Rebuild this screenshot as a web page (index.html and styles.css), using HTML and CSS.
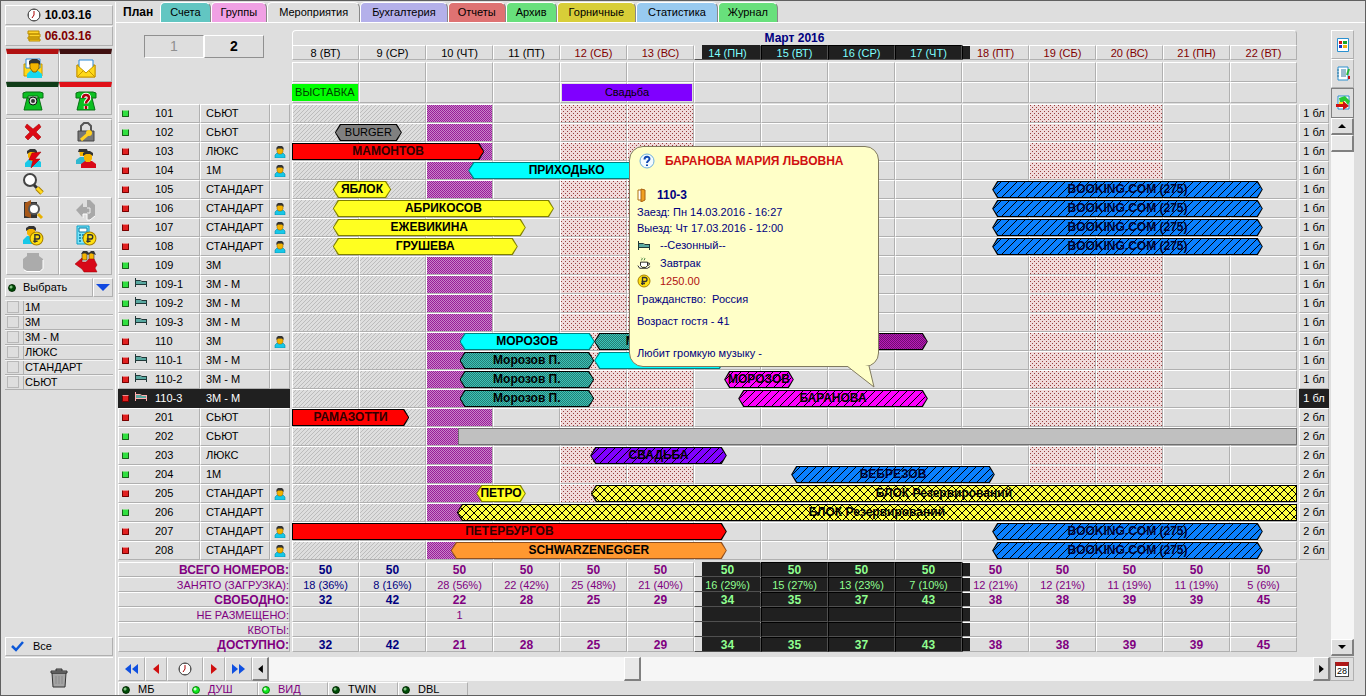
FILE: index.html
```html
<!DOCTYPE html>
<html lang="ru">
<head>
<meta charset="UTF-8">
<meta name="viewport" content="width=device-width, initial-scale=1.0">
<title>План номеров</title>
<link rel="stylesheet" href="styles.css">
</head>
<body>

<!-- набор иконок -->
<svg class="sprite" aria-hidden="true">
    <symbol id="i-clock" viewBox="0 0 14 14"><circle cx="7" cy="7" r="6" fill="#fff" stroke="#333"/><path d="M7 3v4l-2 3" fill="none" stroke="#a00"/><path d="M7 1v1M7 12v1M1 7h1M12 7h1" stroke="#333"/></symbol>
    <symbol id="i-coins" viewBox="0 0 14 12"><path d="M1 1h11v3H1zM2 4h11v3H2zM1 7h11v2H1zM2 9h11v2H2z" fill="#ffd52a" stroke="#b88a00"/></symbol>
    <symbol id="i-man" viewBox="0 0 12 12"><path d="M1 12V9l2-2h6l2 2v3z" fill="#16c8e8" stroke="#0a8aa8" stroke-width=".6"/><path d="M3 2h6v4L7.500 8h-3L3 6z" fill="#f2b200" stroke="#8a6200" stroke-width=".5"/><path d="M2.500 4V1.500L4 0h4l1.500 1.500V4L8 2.500H4z" fill="#333"/></symbol>
    <symbol id="i-mail" viewBox="0 0 20 20"><path d="M1 7h18v12H1z" fill="#ffd91a" stroke="#c89600"/><path d="M3 2h14v8l-7 5-7-5z" fill="#fff" stroke="#2a8ad8"/><path d="M1 7l9 8 9-8v12H1z" fill="#ffd91a" stroke="#c89600"/><path d="M1 19l6-6M19 19l-6-6" fill="none" stroke="#c89600"/></symbol>
    <symbol id="i-mailman" viewBox="0 0 20 20"><path d="M1 6h18v12H1z" fill="#ffd91a" stroke="#c89600"/><path d="M3 1h14v9H3z" fill="#fff" stroke="#2a8ad8"/><path d="M4 20v-4l4-4h6l5 4v4z" fill="#18d8f0"/><path d="M7 5h9v5l-3 4h-3l-3-4z" fill="#f5b400" stroke="#8a6200"/><path d="M6 7V3l3-2h5l3 2v4l-2-2H8z" fill="#333"/></symbol>
    <symbol id="i-phone" viewBox="0 0 22 20"><path d="M1 2l3-1h14l3 1v5h-5V5H6v2H1z" fill="#0cc022" stroke="#087014"/><path d="M5 7h12l3 12H2z" fill="#0cc022" stroke="#087014"/></symbol>
    <symbol id="i-dial" viewBox="0 0 22 20"><use href="#i-phone"/><circle cx="11" cy="10" r="4" fill="#ddd" stroke="#111"/><circle cx="11" cy="10" r="2" fill="#333"/></symbol>
    <symbol id="i-ask" viewBox="0 0 22 20"><use href="#i-phone"/><path d="M8 7C8 3 14 3 14 7 14 9.500 11 9 11 12.500M11 15v3" fill="none" stroke="#fff" stroke-width="4.500"/><path d="M8 7C8 3 14 3 14 7 14 9.500 11 9 11 12.500M11 15v3" fill="none" stroke="#b00010" stroke-width="2.500"/></symbol>
    <symbol id="i-cross" viewBox="0 0 20 20"><path d="M4 2l6 5 6-5 2 3-5 5 5 5-3 3-5-5-5 5-3-3 5-5-5-5z" fill="#dc0a14" stroke="#a00000" stroke-width=".5"/></symbol>
    <symbol id="i-lock" viewBox="0 0 20 20"><path d="M5 9V4l3-3h4l3 3v5" fill="none" stroke="#555" stroke-width="2"/><path d="M2 9h16v10H2z" fill="#777" stroke="#444"/><path d="M5 18l7-6" stroke="#ffd020" stroke-width="3"/><circle cx="13" cy="11" r="3" fill="#ffd020"/></symbol>
    <symbol id="i-manbolt" viewBox="0 0 20 20"><path d="M2 19v-4l4-4h8l4 3v5z" fill="#18c8e8"/><path d="M5 4h8v5l-3 4H8L5 9z" fill="#f5b400"/><path d="M4 6V3l3-2h5l2 2v3l-3-2H7z" fill="#333"/><path d="M18 4l-9 1-3 7h4l-2 8 9-9h-5z" fill="#e00010" stroke="#900" stroke-width=".5"/></symbol>
    <symbol id="i-couple" viewBox="0 0 22 20"><path d="M1 16v-4l4-3h7v7z" fill="#30b8d0"/><path d="M4 2h8v6H5z" fill="#f5b400"/><path d="M3 4l1-3h8l1 3z" fill="#333"/><path d="M6 20v-4l4-3h7l4 3v4z" fill="#d80818"/><path d="M9 6h8v5l-2 3h-4l-2-3z" fill="#f5b400"/><path d="M8 8V5l3-2h4l3 2v3l-3-2h-4z" fill="#333"/></symbol>
    <symbol id="i-lens" viewBox="0 0 22 22"><circle cx="8" cy="7" r="6" fill="#fff" stroke="#444" stroke-width="2"/><path d="M12 12l3 3" stroke="#333" stroke-width="3"/><path d="M15 15l5 5" stroke="#a88000" stroke-width="5"/><path d="M15 15l5 5" stroke="#ffd820" stroke-width="3"/></symbol>
    <symbol id="i-doorlens" viewBox="0 0 22 22"><path d="M2 3h13v16H2z" fill="#333"/><path d="M3 4l6-3v18l-6-2z" fill="#a85818"/><circle cx="12" cy="10" r="5" fill="#fff" stroke="#555" stroke-width="2"/><path d="M16 15l4 4" stroke="#e8b000" stroke-width="3"/></symbol>
    <symbol id="i-back" viewBox="0 0 22 22"><path d="M1 11l7-7v4h4V1h3l5 5v11l-5 4h-3v-6H8v4z" fill="#a8a8a8"/><path d="M8 19v-4h4v6h3l5-4" fill="none" stroke="#fff"/><path d="M12 9h3v5h-3" fill="none" stroke="#eee"/></symbol>
    <symbol id="i-rub" viewBox="0 0 14 14"><circle cx="7" cy="7" r="6" fill="#ffe010" stroke="#a88000"/><path d="M5.500 11V3.500h2.500a2 2 0 0 1 0 4H4.500M4 9.500h4" fill="none" stroke="#333" stroke-width="1.300"/></symbol>
    <symbol id="i-manrub" viewBox="0 0 22 22"><path d="M1 19v-4l4-4h6v8z" fill="#18c8e8"/><path d="M5 3h8v6l-3 3H8L5 9z" fill="#f5b400"/><path d="M4 6V3l3-2h5l2 2v3l-3-2H7z" fill="#333"/><use href="#i-rub" x="7" y="6" width="15" height="15"/></symbol>
    <symbol id="i-calcrub" viewBox="0 0 22 22"><path d="M2 1h12v18H2z" fill="#7be4f8" stroke="#0aa0c8"/><path d="M4 3h8v4H4z" fill="#fff" stroke="#0878a0"/><path d="M4 10h2m1 0h2m1 0h2M4 13h2m1 0h2M4 16h2" stroke="#0878a0" stroke-width="1.500"/><use href="#i-rub" x="7" y="6" width="15" height="15"/></symbol>
    <symbol id="i-jar" viewBox="0 0 22 20"><path d="M5 1h12v3l4 3v9l-3 3H4l-3-3V7l4-3z" fill="#ababab"/><path d="M2 18l3 1.500h13l3-3V8" fill="none" stroke="#fff"/></symbol>
    <symbol id="i-group" viewBox="0 0 24 22"><path d="M8 2h5v7H8zM15 2h5v7h-5z" fill="#f5b400" stroke="#333" stroke-width=".6"/><path d="M7 3l2-3h4l2 2 2-2h3l2 4-5-2-3 2-3-2z" fill="#333"/><path d="M1 13l7-6v4h4l3-3h5l3 6-2 3 2 4H10l-2-3z" fill="#d80818" stroke="#900" stroke-width=".5"/></symbol>
    <symbol id="i-bed" viewBox="0 0 14 9"><path d="M1.500 0v9M1 6.500h12M12.500 3v6M2 2.500h4l2 1h5" stroke="currentColor" fill="none"/><path d="M2 3h4l2 1h4v2H2z" fill="#58a8a0"/></symbol>
    <symbol id="i-cup" viewBox="0 0 16 14"><path d="M4 6h8v4l-2 2H6l-2-2zM12 7h2v2l-2 1M1 10l2 3h9l3-2" fill="#fff" stroke="#111"/><path d="M5 4l1-2-1-1M8 4l1-2-1-1" fill="none" stroke="#287028"/></symbol>
    <symbol id="i-door" viewBox="0 0 10 14"><path d="M1 2h4v10H1z" fill="#fff" stroke="#b07010"/><path d="M4 1l4 1v10l-4 2z" fill="#f0a020" stroke="#a86010"/></symbol>
    <symbol id="i-help" viewBox="0 0 16 16"><circle cx="8" cy="8" r="7" fill="#f4fbff" stroke="#6fb0dc"/><path d="M5.500 6.500C5.500 3 10.500 3 10.500 6 10.500 8 8 7.500 8 10M8 11.500v1.500" fill="none" stroke="#1048b0" stroke-width="2"/></symbol>
    <symbol id="i-trash" viewBox="0 0 18 20"><path d="M2 5h14l-1 14H3z" fill="#a4a4a4" stroke="#333"/><path d="M1 3h16v2H1zM6 3V1h6v2" fill="#888" stroke="#333"/><path d="M6 8v8M9 8v8M12 8v8" stroke="#8a8a8a"/></symbol>
    <symbol id="i-check" viewBox="0 0 13 11"><path d="M1 5l4 4 7-8" fill="none" stroke="#0c58d8" stroke-width="2.500"/></symbol>
    <symbol id="i-sheet" viewBox="0 0 12 16"><path d="M.5 1.500h11v13H.5z" fill="#fff" stroke="#2a90d0"/><path d="M2 4h3v3H2z" fill="#d01818"/><path d="M6 4h4v3H6z" fill="#18a828"/><path d="M2 8h3v3H2z" fill="#1838c8"/><path d="M6 8h4v3H6z" fill="#f0b010"/></symbol>
    <symbol id="i-list" viewBox="0 0 14 16"><path d="M2 1h10v13H2z" fill="#fff" stroke="#2a90d0"/><path d="M5 4h5M5 6h5M5 8h5M5 10h5M1 4h2M1 7h2M1 10h2" stroke="#3078a0"/><path d="M13 3l-2 6" stroke="#28b838" stroke-width="2"/><path d="M13 10v3" stroke="#c01010" stroke-width="2"/></symbol>
    <symbol id="i-export" viewBox="0 0 16 16"><path d="M3 1h11v13H3z" fill="#fff" stroke="#2a90d0"/><path d="M4 3l6-2 5 5-2 4-3-4-5 2z" fill="#28c838"/><path d="M4 7h6v2H4z" fill="#ffe020"/><path d="M1 9h7V6l6 5-6 4v-3H1z" fill="#d01010"/></symbol>
    <symbol id="i-left" viewBox="0 0 6 10"><path d="M6 0v10L0 5z" fill="currentColor"/></symbol>
    <symbol id="i-right" viewBox="0 0 6 10"><path d="M0 0v10l6-5z" fill="currentColor"/></symbol>
    <symbol id="i-up" viewBox="0 0 8 4"><path d="M0 4h8L4 0z" fill="currentColor"/></symbol>
    <symbol id="i-down" viewBox="0 0 8 4"><path d="M0 0h8L4 4z" fill="currentColor"/></symbol>
</svg>

<div class="app">
    <aside class="sidebar">
        <div class="date"><svg width="14" height="14"><use href="#i-clock"/></svg>10.03.16</div>
        <div class="date date-hotel"><svg width="14" height="12"><use href="#i-coins"/></svg>06.03.16</div>
        <div class="tools tools-top">
            <button class="led-red" aria-label="Гость"><svg width="20" height="20"><use href="#i-mailman"/></svg></button>
            <button class="led-dark" aria-label="Почта"><svg width="20" height="20"><use href="#i-mail"/></svg></button>
            <button class="led-green" aria-label="Телефон"><svg width="22" height="20"><use href="#i-dial"/></svg></button>
            <button class="led-on" aria-label="Запрос"><svg width="22" height="20"><use href="#i-ask"/></svg></button>
        </div>
        <div class="tools">
            <button aria-label="Удалить"><svg width="20" height="20"><use href="#i-cross"/></svg></button>
            <button aria-label="Замок"><svg width="20" height="20"><use href="#i-lock"/></svg></button>
            <button aria-label="Быстрое заселение"><svg width="20" height="20"><use href="#i-manbolt"/></svg></button>
            <button aria-label="Гости"><svg width="22" height="20"><use href="#i-couple"/></svg></button>
            <button aria-label="Поиск"><svg width="22" height="22"><use href="#i-lens"/></svg></button>
            <span></span>
            <button aria-label="Поиск номера"><svg width="22" height="22"><use href="#i-doorlens"/></svg></button>
            <button aria-label="Назад"><svg width="22" height="22"><use href="#i-back"/></svg></button>
            <button aria-label="Счет гостя"><svg width="22" height="22"><use href="#i-manrub"/></svg></button>
            <button aria-label="Расчет"><svg width="22" height="22"><use href="#i-calcrub"/></svg></button>
            <button aria-label="Касса"><svg width="22" height="20"><use href="#i-jar"/></svg></button>
            <button aria-label="Выезд группы"><svg width="24" height="22"><use href="#i-group"/></svg></button>
        </div>
        <div class="choose">
            <button class="choose-main"><i class="lamp"></i>Выбрать</button>
            <button class="choose-drop" aria-label="Открыть список"><svg width="14" height="7"><use href="#i-down"/></svg></button>
        </div>
        <div class="types">
            <label><input type="checkbox"><span>1М</span></label>
            <label><input type="checkbox"><span>3М</span></label>
            <label><input type="checkbox"><span>3М - М</span></label>
            <label><input type="checkbox"><span>ЛЮКС</span></label>
            <label><input type="checkbox"><span>СТАНДАРТ</span></label>
            <label><input type="checkbox"><span>СЬЮТ</span></label>
        </div>
        <button class="all"><svg width="13" height="11"><use href="#i-check"/></svg>Все</button>
        <button class="trash" aria-label="Корзина"><svg width="18" height="20"><use href="#i-trash"/></svg></button>
    </aside>

    <main class="main">
        <nav class="tabs">
            <button class="tab active">План</button>
            <button class="tab teal">Счета</button>
            <button class="tab pink">Группы</button>
            <button class="tab plain wide">Мероприятия</button>
            <button class="tab lilac wide">Бухгалтерия</button>
            <button class="tab red">Отчеты</button>
            <button class="tab green">Архив</button>
            <button class="tab gold wide">Горничные</button>
            <button class="tab blue wide">Статистика</button>
            <button class="tab green">Журнал</button>
        </nav>

        <div class="work">
            <table class="plan">
                <colgroup>
                    <col class="c-room"><col class="c-type"><col class="c-guest"><col class="c-gap">
                    <col span="15">
                    <col class="c-gap"><col class="c-block">
                </colgroup>
                <thead id="head"></thead>
                <tbody id="rooms"></tbody>
                <tfoot id="totals"></tfoot>
            </table>
            <div class="rail">
                <button class="rail-btn" aria-label="Легенда"><svg width="12" height="16"><use href="#i-sheet"/></svg></button>
                <button class="rail-btn" aria-label="Список"><svg width="14" height="16"><use href="#i-list"/></svg></button>
                <button class="rail-btn pressed" aria-label="Экспорт"><svg width="16" height="16"><use href="#i-export"/></svg></button>
                <button class="sb-btn" aria-label="Вверх"><svg width="8" height="4"><use href="#i-up"/></svg></button>
                <div class="track-v"><div class="thumb-v"></div></div>
                <button class="sb-btn" aria-label="Вниз"><svg width="8" height="4"><use href="#i-down"/></svg></button>
            </div>
        </div>

        <div class="pager">
            <button class="pg blue-ink" aria-label="В начало"><svg width="6" height="10"><use href="#i-left"/></svg><svg width="6" height="10"><use href="#i-left"/></svg></button>
            <button class="pg pg-small red-ink" aria-label="Назад"><svg width="6" height="10"><use href="#i-left"/></svg></button>
            <button class="pg pg-wide" aria-label="Сегодня"><svg width="14" height="14"><use href="#i-clock"/></svg></button>
            <button class="pg pg-small red-ink" aria-label="Вперед"><svg width="6" height="10"><use href="#i-right"/></svg></button>
            <button class="pg blue-ink" aria-label="В конец"><svg width="6" height="10"><use href="#i-right"/></svg><svg width="6" height="10"><use href="#i-right"/></svg></button>
            <button class="sb-btn sb-side" aria-label="Влево"><svg width="5" height="8"><use href="#i-left"/></svg></button>
            <div class="track-h"><div class="thumb-h"></div></div>
            <button class="sb-btn sb-side" aria-label="Вправо"><svg width="5" height="8"><use href="#i-right"/></svg></button>
            <button class="calendar" aria-label="Календарь"><span>28</span></button>
        </div>

        <div class="status">
            <button><i class="lamp"></i>МБ</button>
            <button class="on"><i class="lamp lit"></i>ДУШ</button>
            <button class="on"><i class="lamp lit"></i>ВИД</button>
            <button><i class="lamp"></i>TWIN</button>
            <button><i class="lamp"></i>DBL</button>
        </div>
    </main>
</div>

<template id="tip">
    <div class="tip">
        <svg class="tip-tail" width="30" height="23" viewBox="0 0 30 23"><path d="M1 0L28 21 23 0" fill="#ffffc8" stroke="#807a60"/></svg>
        <h2><svg width="16" height="16"><use href="#i-help"/></svg>БАРАНОВА МАРИЯ ЛЬВОВНА</h2>
        <p class="tip-room"><svg width="10" height="14"><use href="#i-door"/></svg>110-3</p>
        <p class="tight">Заезд: Пн 14.03.2016 - 16:27</p>
        <p class="tight">Выезд: Чт 17.03.2016 - 12:00</p>
        <p class="with-icon bed-line"><svg width="14" height="9"><use href="#i-bed"/></svg>--Сезонный--</p>
        <p class="with-icon"><svg width="16" height="14"><use href="#i-cup"/></svg>Завтрак</p>
        <p class="with-icon price"><svg width="14" height="14"><use href="#i-rub"/></svg>1250.00</p>
        <p>Гражданство:&nbsp; Россия</p>
        <p class="spaced">Возраст гостя - 41</p>
        <p class="note">Любит громкую музыку -</p>
    </div>
</template>

<script src="script.js"></script>
</body>
</html>
```
FILE: styles.css
```css
* {
    box-sizing: border-box;
}
body {
    margin: 0;
    background-color: #dedede;
    font-family: 'Liberation Sans', Arial, sans-serif;
    font-size: 11px;
    line-height: 13px;
    color: #000;
}
button {
    margin: 0;
    padding: 0;
    border: none;
    background-color: #dedede;
    font: inherit;
    color: inherit;
    display: flex;
    align-items: center;
    justify-content: center;
}
svg {
    flex: none;
}
.sprite {
    display: none;
}
.app {
    display: flex;
    min-height: 100vh;
    border: 1px solid #606060;
    padding-top: 1px;
}

/* левая панель */
.sidebar {
    width: 115px;
    flex: none;
    display: flex;
    flex-direction: column;
    padding: 3px 2px 2px 4px;
    border-right: 1px solid #fff;
}
.date {
    height: 20px;
    margin-bottom: 1px;
    display: flex;
    align-items: center;
    justify-content: center;
    gap: 4px;
    font-size: 12px;
    font-weight: bold;
    border: 1px solid #b0b0b0;
    border-top-color: #fff;
    border-left-color: #fff;
}
.date-hotel {
    color: #800000;
}
.tools {
    display: grid;
    grid-template-columns: 1fr 1fr;
    grid-auto-rows: 26px;
    margin: 0 1px 3px;
    border-top: 1px solid #b0b0b0;
}
.tools-top {
    grid-auto-rows: 33px;
    margin: 1px 1px 3px;
}
.tools button {
    border: 1px solid #b0b0b0;
    border-top-color: #fff;
    border-left-color: #fff;
}
.tools-top button {
    border-top: 5px solid #333;
}
.tools-top .led-red {
    border-top-color: #b01010;
}
.tools-top .led-dark {
    border-top-color: #401010;
}
.tools-top .led-green {
    border-top-color: #103c18;
}
.tools-top .led-on {
    border-top-color: #e01018;
}
.choose {
    display: flex;
    height: 19px;
    margin-bottom: 3px;
}
.choose-main {
    flex: 1;
    justify-content: flex-start;
    gap: 7px;
    padding-left: 2px;
    border: 1px solid #b0b0b0;
    border-top-color: #fff;
    border-left-color: #fff;
}
.choose-drop {
    width: 20px;
    color: #1048e0;
    border: 1px solid #b0b0b0;
    border-top-color: #fff;
    border-left-color: #fff;
}
.lamp {
    width: 8px;
    height: 8px;
    flex: none;
    border-radius: 50%;
    border: 1px solid #002800;
    background: radial-gradient(circle at 2px 2px, #80c080 1px, #004c08 2px);
}
.lamp.lit {
    border-color: #008800;
    background: radial-gradient(circle at 2px 2px, #d0ffd0 1px, #10e820 2px);
}
.types label {
    display: flex;
    height: 15px;
    align-items: stretch;
    border-bottom: 1px solid #b0b0b0;
    border-top: 1px solid #f4f4f4;
}
.types input {
    appearance: none;
    width: 12px;
    height: 12px;
    margin: 0 4px 0 2px;
    border: 1px solid #b8b8b8;
}
.types span {
    flex: 1;
    padding-left: 1px;
    border-left: 1px solid #b0b0b0;
}
.all {
    height: 19px;
    margin-top: auto;
    justify-content: flex-start;
    gap: 9px;
    padding-left: 5px;
    border: 1px solid #b0b0b0;
    border-top-color: #fff;
    border-left-color: #fff;
}
.trash {
    height: 36px;
    margin-top: 1px;
    border-top: 1px solid #fff;
    padding-top: 4px;
}

/* закладки */
.main {
    flex: 1;
    min-width: 0;
    display: flex;
    flex-direction: column;
}
.tabs {
    display: flex;
    height: 21px;
    padding-left: 2px;
    border-bottom: 1px solid #fff;
}
.tab {
    height: 20px;
    padding: 0 9px;
    border: 1px solid #fff;
    border-right-color: #888;
    border-bottom: none;
    border-radius: 5px 6px 0 0;
}
.tab.wide {
    padding: 0 11px;
}
.tab.active {
    padding: 0 6px 0 4px;
    font-size: 12px;
    font-weight: bold;
    border-color: transparent;
}
.tab.teal {
    background-color: #62c6c2;
}
.tab.pink {
    background-color: #f0a0e4;
}
.tab.lilac {
    background-color: #b4b0ea;
}
.tab.red {
    background-color: #de7272;
}
.tab.green {
    background-color: #68e07c;
}
.tab.gold {
    background-color: #d8ce38;
}
.tab.blue {
    background-color: #98caf0;
}

/* план */
.work {
    display: flex;
    padding: 7px 11px 5px 2px;
    flex: 1;
    gap: 2px;
}
.plan {
    flex: 1;
    width: 100%;
    table-layout: fixed;
    border-collapse: separate;
    border-spacing: 0;
    align-self: flex-start;
}
.c-room {
    width: 82px;
}
.c-type {
    width: 70px;
}
.c-guest {
    width: 20px;
}
.c-gap {
    width: 2px;
}
.c-block {
    width: 30px;
}
.plan td, .plan th {
    height: 19px;
    padding: 0;
    font-weight: normal;
    text-align: center;
    white-space: nowrap;
    border: 1px solid #b0b0b0;
    border-top-color: #fff;
    border-left-color: #fff;
}
.plan .none {
    border: none;
}
.plan .month {
    height: 15px;
    font-size: 12px;
    font-weight: bold;
    color: #000080;
    border-bottom: none;
    border-radius: 4px 4px 0 0;
}
.plan .dates th {
    height: 15px;
    line-height: 12px;
}
.plan .spacer td {
    height: 2px;
    border: none;
}
.plan .spacer.thin td {
    height: 1px;
}
.plan .events td {
    height: 20px;
}
.plan .events + .events td {
    height: 21px;
}
.plan th.dark-red {
    color: #800000;
}
.floors {
    display: flex;
    height: 70px;
    padding: 3px 0 0 26px;
}
.floors button {
    width: 60px;
    height: 23px;
    font-size: 14px;
    font-weight: bold;
    border: 1px solid #909090;
    border-top-color: #fff;
    border-left-color: #fff;
}
.floors .off {
    font-weight: normal;
    color: #909090;
    border-color: #909090 #fff #fff #909090;
}
.plan .room {
    text-align: left;
}
.room-in {
    display: flex;
    align-items: center;
    height: 17px;
    padding-left: 3px;
}
.room-in i {
    width: 7px;
    height: 7px;
    margin-right: 5px;
    border: 1px solid #700;
    border-top-color: #e89090;
    border-radius: 1px;
    background-color: #e02020;
}
.room-in i.free {
    border-color: #186018;
    border-top-color: #90e090;
    background-color: #30e040;
}
.bed-slot {
    width: 21px;
    height: 13px;
    color: #203838;
}
.plan .type {
    text-align: left;
    padding-left: 5px;
}
.plan td svg {
    display: block;
    margin: 0 auto;
}
.plan .bed-slot svg {
    margin: 0;
}
.plan .current td.room, .plan .current td.type, .plan .current td.guest, .plan .current td.block {
    background-color: #202020;
    border-color: #202020;
    color: #fff;
}
.current .bed-slot {
    color: #ffb0b0;
}
.plan .past {
    background-image: url("data:image/svg+xml,%3Csvg xmlns='http://www.w3.org/2000/svg' width='4' height='4' shape-rendering='crispEdges'%3E%3Cpath d='M0 3.5h1M1 2.5h1M2 1.5h1M3 .5h1' stroke='%23bcbcbc'/%3E%3C/svg%3E");
}
.plan .today {
    background: #c884c8 url("data:image/svg+xml,%3Csvg xmlns='http://www.w3.org/2000/svg' width='4' height='4' shape-rendering='crispEdges'%3E%3Cpath d='M0 .5h1M2 .5h1M1 1.5h1M3 1.5h1M0 2.5h1M2 2.5h1M1 3.5h1M3 3.5h1' stroke='%23981c98'/%3E%3C/svg%3E");
}
.plan .weekend {
    background: #f0dada url("data:image/svg+xml,%3Csvg xmlns='http://www.w3.org/2000/svg' width='4' height='4' shape-rendering='crispEdges'%3E%3Cpath d='M0 .5h1M2 2.5h1' stroke='%23983c3c'/%3E%3C/svg%3E");
}
/* строка 19px, узор 4px: сдвигаем, чтобы рисунок шел без разрыва */
.plan tr:nth-child(4n+2) .past, .plan tr:nth-child(4n+2) .today, .plan tr:nth-child(4n+2) .weekend {
    background-position: 0 1px;
}
.plan tr:nth-child(4n+3) .past, .plan tr:nth-child(4n+3) .today, .plan tr:nth-child(4n+3) .weekend {
    background-position: 0 2px;
}
.plan tr:nth-child(4n) .past, .plan tr:nth-child(4n) .today, .plan tr:nth-child(4n) .weekend {
    background-position: 0 3px;
}
.plan .day-first {
    position: relative;
}
.lane {
    position: absolute;
    inset: 0 -1px;
}

/* полосы бронирования */
.bar {
    position: absolute;
    top: 0;
    bottom: 0;
    z-index: 1;
    background-color: #000;
    clip-path: polygon(5px 0, calc(100% - 5px) 0, 100% 50%, calc(100% - 5px) 100%, 5px 100%, 0 50%);
}
.bar span {
    position: absolute;
    inset: 1px;
    clip-path: polygon(5px 0, calc(100% - 5px) 0, 100% 50%, calc(100% - 5px) 100%, 5px 100%, 0 50%);
    font-size: 12px;
    font-weight: bold;
    line-height: 15px;
    overflow: hidden;
}
.bar.from-before, .bar.from-before span {
    clip-path: polygon(0 0, calc(100% - 5px) 0, 100% 50%, calc(100% - 5px) 100%, 0 100%);
}
.bar.goes-on, .bar.goes-on span {
    clip-path: polygon(5px 0, 100% 0, 100% 100%, 5px 100%, 0 50%);
}
.bar.square, .bar.square span {
    clip-path: none;
}
.bar.event {
    background: none;
    top: 1px;
    bottom: 1px;
}
.bar.event span, .bar.gray span {
    font-size: 11px;
    font-weight: normal;
}
.bar.event span {
    inset: 0;
    line-height: 17px;
}
.gray span {
    background-color: #808080;
}
.red-bar span {
    background-color: #ff0000;
    color: #300000;
}
.cyan-bar {
    background-color: #008080;
}
.cyan-bar span {
    background-color: #00ffff;
}
.yellow-bar {
    background-color: #808000;
}
.yellow-bar span {
    background-color: #ffff20;
}
.orange-bar {
    background-color: #905020;
}
.orange-bar span {
    background-color: #ff9830;
}
.silver-bar {
    background-color: #707070;
}
.silver-bar span {
    background-color: #c0c0c0;
}
.blue-bar span, .violet-bar span, .magenta-bar span {
    background-image: url("data:image/svg+xml,%3Csvg xmlns='http://www.w3.org/2000/svg' width='8' height='8' shape-rendering='crispEdges'%3E%3Cpath d='M0 7.5h1M1 6.5h1M2 5.5h1M3 4.5h1M4 3.5h1M5 2.5h1M6 1.5h1M7 .5h1' stroke='%23000'/%3E%3C/svg%3E");
}
.blue-bar span {
    background-color: #0a80ff;
    color: #000030;
}
.violet-bar span {
    background-color: #8000ff;
}
.magenta-bar span {
    background-color: #ff00ff;
}
.block-bar span {
    background: #ffff40 url("data:image/svg+xml,%3Csvg xmlns='http://www.w3.org/2000/svg' width='8' height='8' shape-rendering='crispEdges'%3E%3Cpath d='M0 7.5h1M1 6.5h1M2 5.5h1M3 4.5h1M4 3.5h1M5 2.5h1M6 1.5h1M7 .5h1M0 .5h1M1 1.5h1M2 2.5h1M3 3.5h1M4 4.5h1M5 5.5h1M6 6.5h1M7 7.5h1' stroke='%23000'/%3E%3C/svg%3E");
}
.teal-bar span {
    background: #3cc4b8 url("data:image/svg+xml,%3Csvg xmlns='http://www.w3.org/2000/svg' width='4' height='4' shape-rendering='crispEdges'%3E%3Cpath d='M0 .5h1M2 .5h1M1 1.5h1M3 1.5h1M0 2.5h1M2 2.5h1M1 3.5h1M3 3.5h1' stroke='%23247c74'/%3E%3C/svg%3E");
}
.plum-bar span {
    background: #b818b8 url("data:image/svg+xml,%3Csvg xmlns='http://www.w3.org/2000/svg' width='4' height='4' shape-rendering='crispEdges'%3E%3Cpath d='M0 .5h1M2 .5h1M1 1.5h1M3 1.5h1M0 2.5h1M2 2.5h1M1 3.5h1M3 3.5h1' stroke='%23701070'/%3E%3C/svg%3E");
}
.lime-event span {
    background-color: #00ff00;
    color: #004000;
}
.violet-event span {
    background-color: #8000ff;
}

/* итоги */
.plan .totals td, .plan .totals th {
    height: 15px;
    line-height: 12px;
    color: #800080;
}
.plan .totals th {
    text-align: right;
}
.plan .totals.strong td, .plan .totals.strong th {
    font-size: 12px;
    font-weight: bold;
}
.plan .totals td.before {
    color: #000080;
}
.plan .sel {
    background-color: #202020;
    border-color: #505050;
    border-top-color: #000;
    border-left-color: #000;
}
.plan .sel-start {
    background: linear-gradient(90deg, #dedede 7px, #202020 7px);
    border-left-color: #fff;
    border-top-color: transparent;
}
.plan .sel-end {
    background: linear-gradient(90deg, #202020 7px, #dedede 7px);
    border-left-color: #000;
}
.plan .dates .sel {
    color: #80ffff;
}
.plan .totals .sel {
    color: #90ff90;
}

/* карточка гостя */
.tip {
    position: absolute;
    left: 503%;
    bottom: 40px;
    z-index: 5;
    width: 250px;
    height: 221px;
    padding: 6px 6px 0 7px;
    text-align: left;
    color: #000080;
    background-color: #ffffc8;
    border: 1px solid #807a60;
    border-radius: 14px;
}
.tip-tail {
    position: absolute;
    right: 2px;
    top: 219px;
}
.tip h2 {
    display: flex;
    align-items: center;
    gap: 10px;
    height: 16px;
    margin: 0 0 17px 2px;
    font-size: 12px;
    color: #d01010;
}
.plan .tip svg {
    margin: 0;
}
.tip p {
    margin: 0;
    height: 18px;
    line-height: 18px;
}
.tip .tight {
    height: 16px;
    line-height: 16px;
}
.tip .with-icon, .tip .tip-room {
    display: flex;
    align-items: center;
    gap: 9px;
}
.tip .with-icon svg {
    width: 14px;
}
.tip .bed-line svg {
    color: #203838;
}
.tip .tip-room {
    gap: 10px;
    height: 18px;
    font-size: 12px;
    font-weight: bold;
}
.tip .price {
    color: #b01010;
}
.tip .spaced {
    margin-top: 4px;
}
.tip .note {
    margin-top: 14px;
}

/* правая колонка и прокрутка */
.rail {
    width: 23px;
    display: flex;
    flex-direction: column;
    margin-bottom: -4px;
}
.rail-btn {
    height: 29px;
    border: 1px solid #b0b0b0;
    border-top-color: #fff;
    border-left-color: #fff;
}
.rail-btn.pressed {
    height: 30px;
    border-color: #808080;
}
.sb-btn {
    height: 17px;
    flex: none;
    border: 1px solid #fff;
    border-right: 2px solid #808080;
    border-bottom: 2px solid #808080;
}
.sb-side {
    width: 17px;
    height: auto;
}
.track-v, .track-h {
    flex: 1;
    background-color: #f6f6f6;
}
.thumb-v, .thumb-h {
    background-color: #e8e8e8;
    border: 1px solid #fff;
    border-right: 2px solid #808080;
    border-bottom: 2px solid #808080;
}
.thumb-v {
    height: 17px;
}
.thumb-h {
    width: 17px;
    height: 100%;
    margin-left: 34%;
}
.pager {
    display: flex;
    height: 24px;
    padding: 0 11px 0 2px;
}
.pg {
    width: 27px;
    gap: 1px;
    border: 1px solid #b0b0b0;
    border-top-color: #fff;
    border-left-color: #fff;
}
.pg-small {
    width: 22px;
}
.pg-wide {
    width: 36px;
}
.blue-ink {
    color: #1050e0;
}
.red-ink {
    color: #d01010;
}
.calendar {
    width: 24px;
    border: 1px solid #b0b0b0;
}
.calendar span {
    width: 14px;
    height: 15px;
    font-size: 9px;
    line-height: 11px;
    background-color: #fff;
    border: 1px solid #444;
    border-top: 4px solid #b01818;
}
.status {
    display: flex;
    height: 13px;
    margin-top: 1px;
    padding-left: 2px;
    overflow: hidden;
}
.status button {
    width: 70px;
    height: 15px;
    justify-content: flex-start;
    gap: 8px;
    padding-left: 3px;
    border: 1px solid #b0b0b0;
    border-top-color: #fff;
    border-left-color: #fff;
}
.status .on {
    color: #800080;
}
```
FILE: script.js
```js
var days = ["8 (ВТ)", "9 (СР)", "10 (ЧТ)", "11 (ПТ)", "12 (СБ)", "13 (ВС)", "14 (ПН)", "15 (ВТ)",
    "16 (СР)", "17 (ЧТ)", "18 (ПТ)", "19 (СБ)", "20 (ВС)", "21 (ПН)", "22 (ВТ)"];
var weekend = [4, 5, 11, 12];
var booking = [10.45, 14.49, "BOOKING.COM (275)", "blue-bar"];

// номер, категория, свободен, место, гость, полосы [начало, конец, текст, вид]
var rooms = [
    ["101", "СЬЮТ", 1, 0, 0, []],
    ["102", "СЬЮТ", 1, 0, 0, [[0.64, 1.64, "BURGER", "gray"]]],
    ["103", "ЛЮКС", 0, 0, 1, [[0, 2.87, "МАМОНТОВ", "red-bar from-before"]]],
    ["104", "1М", 0, 0, 1, [[2.63, 5.57, "ПРИХОДЬКО", "cyan-bar"]]],
    ["105", "СТАНДАРТ", 0, 0, 0, [[0.61, 1.48, "ЯБЛОК", "yellow-bar"], booking]],
    ["106", "СТАНДАРТ", 0, 0, 1, [[0.61, 3.91, "АБРИКОСОВ", "yellow-bar"], booking]],
    ["107", "СТАНДАРТ", 0, 0, 1, [[0.61, 3.49, "ЕЖЕВИКИНА", "yellow-bar"], booking]],
    ["108", "СТАНДАРТ", 0, 0, 1, [[0.61, 3.37, "ГРУШЕВА", "yellow-bar"], booking]],
    ["109", "3М", 1, 0, 0, []],
    ["109-1", "3М - М", 1, 1, 0, []],
    ["109-2", "3М - М", 1, 1, 0, []],
    ["109-3", "3М - М", 1, 1, 0, []],
    ["110", "3М", 0, 0, 1, [[2.5, 4.52, "МОРОЗОВ", "cyan-bar"], [4.51, 6.46, "Морозов П.", "teal-bar"], [6.46, 9.49, "", "plum-bar"]]],
    ["110-1", "3М - М", 0, 1, 0, [[2.5, 4.51, "Морозов П.", "teal-bar"], [4.51, 6.46, "", "cyan-bar"]]],
    ["110-2", "3М - М", 0, 1, 0, [[2.5, 4.51, "Морозов П.", "teal-bar"], [6.45, 7.49, "МОРОЗОВ", "magenta-bar"]]],
    ["110-3", "3М - М", 0, 1, 0, [[2.5, 4.51, "Морозов П.", "teal-bar"], [6.66, 9.49, "БАРАНОВА", "magenta-bar"]]],
    ["201", "СЬЮТ", 0, 0, 0, [[0, 1.75, "РАМАЗОТТИ", "red-bar from-before"]]],
    ["202", "СЬЮТ", 1, 0, 0, [[2.48, 15, "", "silver-bar square"]]],
    ["203", "ЛЮКС", 1, 0, 0, [[4.45, 6.49, "СВАДЬБА", "violet-bar"]]],
    ["204", "1М", 1, 0, 0, [[7.45, 10.49, "ВЕБРЕЗОВ", "blue-bar"]]],
    ["205", "СТАНДАРТ", 0, 0, 1, [[2.75, 3.49, "ПЕТРО", "yellow-bar"], [4.46, 15, "БЛОК Резервирований", "block-bar goes-on"]]],
    ["206", "СТАНДАРТ", 1, 0, 0, [[2.46, 15, "БЛОК Резервирований", "block-bar goes-on"]]],
    ["207", "СТАНДАРТ", 0, 0, 1, [[0, 6.49, "ПЕТЕРБУРГОВ", "red-bar from-before"], booking]],
    ["208", "СТАНДАРТ", 0, 0, 1, [[2.37, 6.49, "SCHWARZENEGGER", "orange-bar"], booking]]
];

var totals = [
    ["ВСЕГО НОМЕРОВ:", true, ["50", "50", "50", "50", "50", "50", "50", "50", "50", "50", "50", "50", "50", "50", "50"]],
    ["ЗАНЯТО (ЗАГРУЗКА):", false, ["18 (36%)", "8 (16%)", "28 (56%)", "22 (42%)", "25 (48%)", "21 (40%)", "16 (29%)", "15 (27%)",
        "13 (23%)", "7 (10%)", "12 (21%)", "12 (21%)", "11 (19%)", "11 (19%)", "5 (6%)"]],
    ["СВОБОДНО:", true, ["32", "42", "22", "28", "25", "29", "34", "35", "37", "43", "38", "38", "39", "39", "45"]],
    ["НЕ РАЗМЕЩЕНО:", false, ["", "", "1"]],
    ["КВОТЫ:", false, []],
    ["ДОСТУПНО:", true, ["32", "42", "21", "28", "25", "29", "34", "35", "37", "43", "38", "38", "39", "39", "45"]]
];

function icon(name, w, h) {
    return `<svg width="${w}" height="${h}"><use href="#${name}"/></svg>`;
}

function bars(list) {
    return '<div class="lane">' + list.map(b =>
        `<div class="bar ${b[3]}" style="left:${b[0] * 100}%;width:${(b[1] - b[0]) * 100}%"><span>${b[2]}</span></div>`).join("") + "</div>";
}

function selClass(i) {
    if (i == 6) return "sel sel-start";
    if (i > 6 && i < 10) return "sel";
    return i == 10 ? "sel-end" : "";
}

function dayCells(list, pattern) {
    return days.map((d, i) => {
        var cls = i == 0 ? "day-first" : "";
        if (pattern) {
            if (i < 2) cls += " past";
            if (i == 2) cls += " today";
            if (weekend.includes(i)) cls += " weekend";
        }
        return `<td class="${cls}">${i == 0 ? bars(list) : ""}</td>`;
    }).join("");
}

var gap = '<td class="none"></td>';

document.getElementById("head").innerHTML =
    `<tr><td class="none" colspan="4" rowspan="6"><div class="floors"><button class="off">1</button><button>2</button></div></td>
        <th class="month" colspan="15">Март 2016</th><td class="none" colspan="2" rowspan="6"></td></tr>
    <tr class="dates">${days.map((d, i) => `<th class="${selClass(i)} ${i == 4 || i == 5 || i > 9 ? "dark-red" : ""}">${d}</th>`).join("")}</tr>
    <tr class="spacer"><td colspan="15"></td></tr>
    <tr class="events">${dayCells([], false)}</tr>
    <tr class="events">${dayCells([[0, 0.98, "ВЫСТАВКА", "event square lime-event"], [4.03, 5.97, "Свадьба", "event square violet-event"]], false)}</tr>
    <tr class="spacer thin"><td colspan="15"></td></tr>`;

document.getElementById("rooms").innerHTML = rooms.map(r =>
    `<tr class="${r[0] == "110-3" ? "current" : ""}">
        <td class="room"><div class="room-in"><i class="${r[2] ? "free" : ""}"></i><div class="bed-slot">${r[3] ? icon("i-bed", 14, 9) : ""}</div>${r[0]}</div></td>
        <td class="type">${r[1]}</td>
        <td class="guest">${r[4] ? icon("i-man", 12, 12) : ""}</td>${gap}
        ${dayCells(r[5], true)}${gap}
        <td class="block">${r[0][0]} бл</td>
    </tr>`).join("");

document.getElementById("totals").innerHTML = '<tr class="spacer"><td colspan="21"></td></tr>' + totals.map(t =>
    `<tr class="totals ${t[1] ? "strong" : ""}"><th colspan="3">${t[0]}</th>${gap}
        ${days.map((d, i) => `<td class="${selClass(i)} ${i < 2 ? "before" : ""}">${t[2][i] || ""}</td>`).join("")}
        <td class="none" colspan="2"></td></tr>`).join("");

// карточка выбранного гостя
document.querySelector(".current .lane").appendChild(document.getElementById("tip").content.cloneNode(true));
```
